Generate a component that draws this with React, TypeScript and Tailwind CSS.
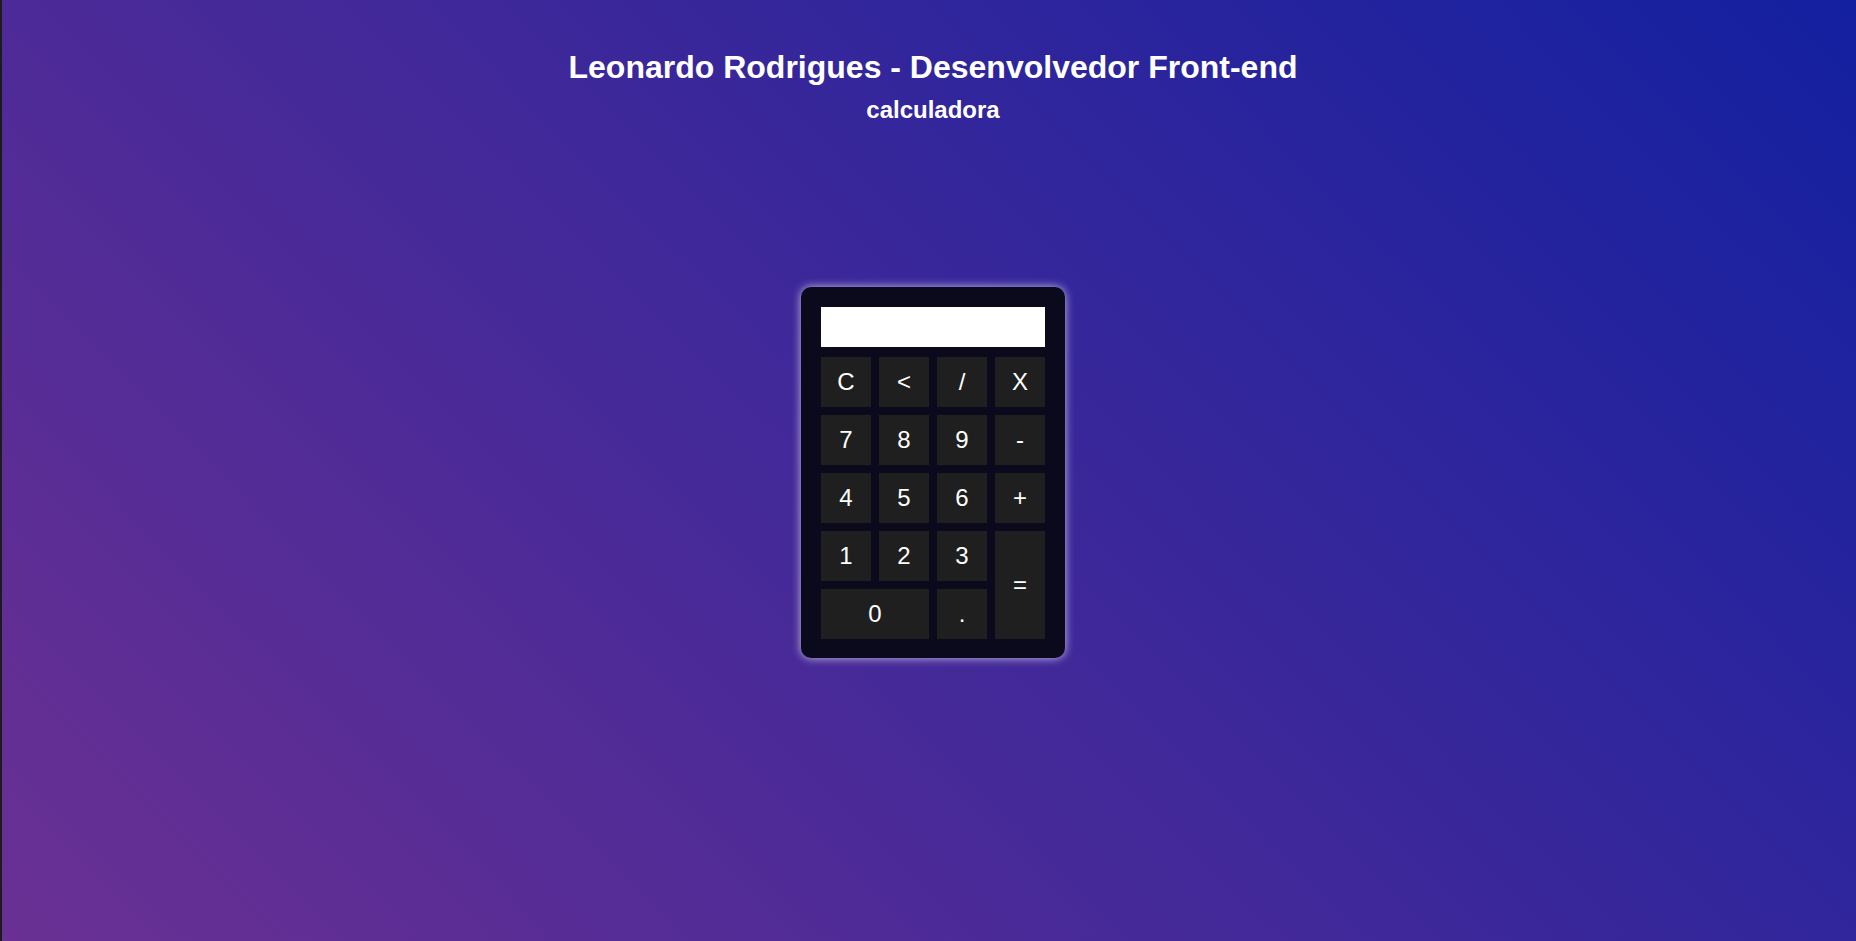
const keys: { label: string; span?: string }[] = [
  { label: "C" },
  { label: "<" },
  { label: "/" },
  { label: "X" },
  { label: "7" },
  { label: "8" },
  { label: "9" },
  { label: "-" },
  { label: "4" },
  { label: "5" },
  { label: "6" },
  { label: "+" },
  { label: "1" },
  { label: "2" },
  { label: "3" },
  { label: "=", span: "row-span-2" },
  { label: "0", span: "col-span-2" },
  { label: "." },
];

export default function App() {
  return (
    <div className="flex min-h-screen w-full font-['Liberation_Sans',Arial,sans-serif]">
      <div className="w-[2px] shrink-0 bg-[#1c1c1c]" />
      <main className="flex flex-1 flex-col items-center bg-[linear-gradient(45deg,#6a3093,#1320a0)] pl-[8px] pt-[49px] text-white">
        {/* Header */}
        <h1 className="text-[32px] font-bold leading-[37px]">
          Leonardo Rodrigues - Desenvolvedor Front-end
        </h1>
        <h2 className="mt-[10px] text-[24px] font-bold leading-[28px]">calculadora</h2>

        {/* Calculator */}
        <div className="mt-[163px] w-[264px] rounded-[10px] bg-[#0b0a1d] p-[20px] pb-[19px] shadow-[0_0_10px_rgba(255,255,255,0.7)]">
          <div className="h-[40px] w-full bg-white" />
          <div className="mt-[10px] grid grid-cols-[repeat(4,50px)] grid-rows-[repeat(5,50px)] gap-[8px]">
            {keys.map((k) => (
              <button
                key={k.label}
                className={`flex items-center justify-center bg-[#1f1f1f] text-[24px] text-white ${k.span ?? ""}`}
              >
                {k.label}
              </button>
            ))}
          </div>
        </div>
      </main>
    </div>
  );
}
